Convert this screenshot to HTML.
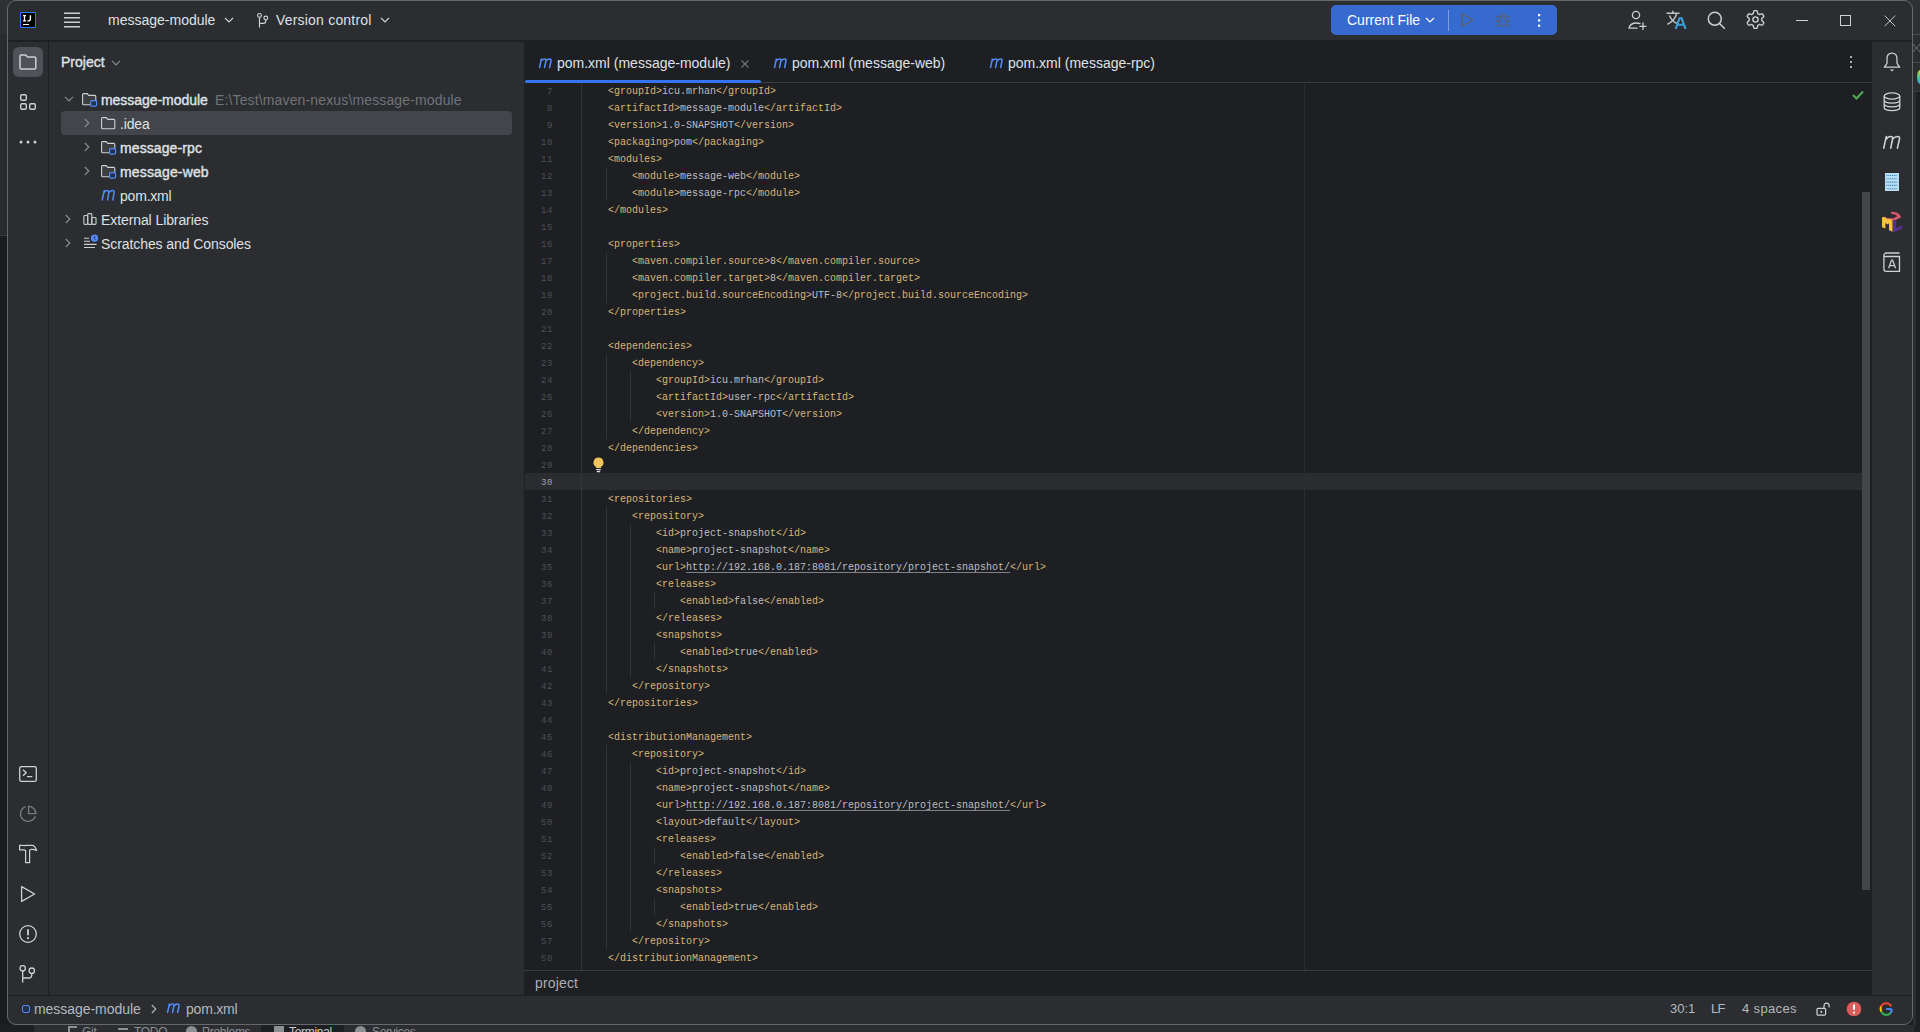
<!DOCTYPE html>
<html><head><meta charset="utf-8">
<style>
*{box-sizing:border-box}
html,body{margin:0;padding:0;width:1920px;height:1032px;overflow:hidden;background:#1b1c1f;font-family:"Liberation Sans",sans-serif;position:relative}
.a{position:absolute}
svg{position:absolute;overflow:visible}
#win{left:0;top:0;width:1920px;height:1032px;clip-path:inset(0px 8px 7px 7px round 9px);background:#2b2d30}
#frame{left:7px;top:0;width:1906px;height:1025px;border:1px solid #66686b;border-radius:9px;pointer-events:none}
.t{position:absolute;white-space:pre;color:#dfe1e5;font-size:14px;line-height:16px}
.code{position:absolute;left:584px;white-space:pre;font-family:"Liberation Mono",monospace;font-size:10px;line-height:17px;color:#bcbec4}
.g{color:#d5b778}
.sb{-webkit-text-stroke:0.4px currentColor}
.u{text-decoration:underline;text-decoration-color:#7d818a;text-underline-offset:2px}
.ln{position:absolute;left:524px;width:29px;text-align:right;font-family:"Liberation Mono",monospace;font-size:9px;letter-spacing:0.6px;line-height:17px;color:#4b5059}
</style></head><body>
<!-- outside background -->
<div class="a" style="left:0;top:0;width:20px;height:34px;background:#2e3134"></div>
<div class="a" style="left:0;top:34px;width:7px;height:201px;background:#2a2b2e"></div>
<div class="a" style="left:0;top:235px;width:7px;height:1px;background:#3a3d40"></div>
<div class="a" style="left:0;top:236px;width:7px;height:796px;background:#1b1c1f"></div>
<div class="a" style="left:1900px;top:0;width:20px;height:34px;background:#2e3134"></div><div class="a" style="left:1913px;top:34px;width:7px;height:57px;background:#2b2d30"></div>
<div class="a" style="left:1913px;top:34px;width:7px;height:1px;background:#45484c"></div>
<div class="a" style="left:1913px;top:62px;width:7px;height:1px;background:#45484c"></div>
<div class="a" style="left:1913px;top:91px;width:7px;height:1px;background:#393b40"></div>
<div class="a" style="left:1913px;top:92px;width:7px;height:940px;background:#1e1f22"></div>
<div class="a" style="left:1913px;top:92px;width:3px;height:940px;background:#2b2d30"></div>
<svg style="left:1913px;top:43px" width="8" height="10" viewBox="0 0 8 10"><path d="M0 1l7 8M7 1L0 9" stroke="#6f737a" stroke-width="1"/></svg>
<div class="a" style="left:1917px;top:70px;width:6px;height:14px;border-radius:50%;background:linear-gradient(180deg,#c9d43a,#3cc3a0 60%,#29a8e0)"></div>
<div class="a" style="left:0;top:1025px;width:1920px;height:7px;background:#1e1f22"></div>
<div class="a" style="left:34px;top:1025px;width:1880px;height:7px;background:#2b2d30"></div>



<div class="a" style="left:0;top:1025px;width:1920px;height:7px;overflow:hidden">
  <div class="a" style="left:261px;top:0;width:83px;height:7px;background:#1e1f22"></div>
  <div class="t" style="left:82px;top:-1px;font-size:12px;letter-spacing:-0.3px;color:#8c8f94">Git</div>
  <div class="t" style="left:134px;top:-1px;font-size:12px;letter-spacing:-0.3px;color:#8c8f94">TODO</div>
  <div class="t" style="left:202px;top:-1px;font-size:12px;letter-spacing:-0.3px;color:#8c8f94">Problems</div>
  <div class="t" style="left:289px;top:-1px;font-size:12px;letter-spacing:-0.3px;color:#c9ccd1">Terminal</div>
  <div class="t" style="left:372px;top:-1px;font-size:12px;letter-spacing:-0.3px;color:#8c8f94">Services</div>
  <div class="a" style="left:68px;top:1px;width:9px;height:6px;border-left:2px solid #8c8f94;border-top:2px solid #8c8f94"></div>
  <div class="a" style="left:118px;top:3px;width:10px;height:4px;border-top:2px solid #8c8f94"></div>
  <div class="a" style="left:186px;top:1px;width:11px;height:11px;border-radius:50%;background:#8c8f94"></div>
  <div class="a" style="left:274px;top:1px;width:10px;height:10px;background:#8c8f94"></div>
  <div class="a" style="left:355px;top:1px;width:11px;height:11px;border-radius:50%;background:#8c8f94"></div>
</div>
<div id="win" class="a">

  <!-- ===== TOOLBAR ===== -->
  <div class="a" style="left:20px;top:12px;width:16px;height:16px;background:#000;border:1px solid #1f7bff"></div>
  <svg style="left:20px;top:12px" width="16" height="16" viewBox="0 0 16 16"><path d="M3 3.6h3M4.5 3.6v5.2M3 8.8h3" stroke="#fff" stroke-width="1.3" fill="none"/><path d="M10.4 3.2v3.6q0 2.1-1.7 2.1H7.3" stroke="#fff" stroke-width="1.4" fill="none"/><path d="M3 12.5h6" stroke="#fff" stroke-width="1.2"/></svg>
  <svg style="left:64px;top:12px" width="16" height="16" viewBox="0 0 16 16"><path d="M0 1.2h16M0 5.7h16M0 10.3h16M0 14.8h16" stroke="#ced0d6" stroke-width="1.5"/></svg>
  <div class="t" style="left:108px;top:12px;color:#dfe1e5">message-module</div>
  <svg style="left:224px;top:16px" width="10" height="8" viewBox="0 0 10 8"><path d="M1 2l4 4 4-4" stroke="#ced0d6" stroke-width="1.2" fill="none"/></svg>
  <svg style="left:256px;top:13px" width="14" height="15" viewBox="0 0 14 15"><g stroke="#ced0d6" stroke-width="1.15" fill="none"><circle cx="3.5" cy="2.4" r="1.9"/><circle cx="9.8" cy="5" r="1.9"/><path d="M3.5 4.3V14.6M3.5 10.4H7.2Q9.8 10.4 9.8 7.8V6.9"/></g></svg>
  <div class="t" style="left:276px;top:12px;color:#dfe1e5;letter-spacing:0.2px">Version control</div>
  <svg style="left:380px;top:16px" width="10" height="8" viewBox="0 0 10 8"><path d="M1 2l4 4 4-4" stroke="#ced0d6" stroke-width="1.2" fill="none"/></svg>

  <div class="a" style="left:1331px;top:5px;width:226px;height:30px;background:#366ace;border-radius:5px"></div>
  <div class="t" style="left:1347px;top:12px;color:#fff">Current File</div>
  <svg style="left:1425px;top:16px" width="10" height="8" viewBox="0 0 10 8"><path d="M1 2l4 4 4-4" stroke="#fff" stroke-width="1.2" fill="none"/></svg>
  <div class="a" style="left:1448px;top:10px;width:1px;height:21px;background:#7f9fe3"></div>
  <svg style="left:1460px;top:12px" width="16" height="16" viewBox="0 0 16 16"><path d="M2 1.8v12.4L13 8z" stroke="#5b5f66" stroke-width="1.3" stroke-linejoin="round" fill="none"/></svg>
  <svg style="left:1495px;top:12px" width="16" height="16" viewBox="0 0 16 16"><g stroke="#5b5f66" stroke-width="1.2" fill="none"><ellipse cx="8" cy="9.8" rx="3.6" ry="4.6"/><path d="M5.5 5q0-3 2.5-3t2.5 3"/><path d="M0.5 9.2h3.5M12 9.2h3.5M1 4l3 1.8M15 4l-3 1.8M1 14.5l3-1.8M15 14.5l-3-1.8"/></g></svg>
  <svg style="left:1537px;top:13px" width="4" height="15" viewBox="0 0 4 15"><rect x="1" y="1" width="2.2" height="2.2" fill="#fff"/><rect x="1" y="6.3" width="2.2" height="2.2" fill="#fff"/><rect x="1" y="11.6" width="2.2" height="2.2" fill="#fff"/></svg>

  <svg style="left:1627px;top:10px" width="20" height="20" viewBox="0 0 20 20"><g stroke="#ced0d6" stroke-width="1.3" fill="none" stroke-linecap="round"><circle cx="9" cy="5" r="3.6"/><path d="M13 13.6Q11.5 13 9.5 13Q3 13 2 18.2h8"/><path d="M16 13v6.5M12.8 16.3h6.3"/></g></svg>
  <svg style="left:1665px;top:10px" width="22" height="20" viewBox="0 0 22 20"><g stroke="#bfc2c7" stroke-width="1.5" fill="none"><path d="M1.5 3.2h13M7.8 .8v2.4M11.8 3.2q-1.5 7-9.5 11.2M4.5 5.5q2.5 6 7.5 8"/></g><path d="M10.7 18.8l3.8-10.5h2.2l3.8 10.5M12.3 14.8h6.6" stroke="#3aa0db" stroke-width="2.1" fill="none"/></svg>
  <svg style="left:1707px;top:11px" width="19" height="19" viewBox="0 0 19 19"><g stroke="#ced0d6" stroke-width="1.5" fill="none"><circle cx="7.8" cy="7.8" r="6.5"/><path d="M12.5 12.5l5.3 5.3"/></g></svg>
  <svg style="left:1746px;top:10px" width="19" height="19" viewBox="0 0 19 19"><g stroke="#ced0d6" stroke-width="1.4" fill="none" stroke-linejoin="round"><path d="M9.50 0.60 L9.97 0.61 L10.43 0.65 L10.89 0.71 L11.23 1.36 L11.47 2.16 L11.63 2.96 L11.76 3.62 L12.06 3.74 L12.36 3.89 L12.65 4.04 L12.93 4.22 L13.20 4.40 L13.46 4.60 L14.10 4.39 L14.87 4.13 L15.69 3.93 L16.42 3.90 L16.70 4.27 L16.96 4.65 L17.21 5.05 L17.43 5.46 L17.63 5.88 L17.81 6.31 L17.42 6.93 L16.84 7.53 L16.23 8.07 L15.72 8.51 L15.77 8.84 L15.79 9.17 L15.80 9.50 L15.79 9.83 L15.77 10.16 L15.72 10.49 L16.23 10.93 L16.84 11.47 L17.42 12.07 L17.81 12.69 L17.63 13.12 L17.43 13.54 L17.21 13.95 L16.96 14.35 L16.70 14.73 L16.42 15.10 L15.69 15.07 L14.87 14.87 L14.10 14.61 L13.46 14.40 L13.20 14.60 L12.93 14.78 L12.65 14.96 L12.36 15.11 L12.06 15.26 L11.76 15.38 L11.63 16.04 L11.47 16.84 L11.23 17.64 L10.89 18.29 L10.43 18.35 L9.97 18.39 L9.50 18.40 L9.03 18.39 L8.57 18.35 L8.11 18.29 L7.77 17.64 L7.53 16.84 L7.37 16.04 L7.24 15.38 L6.94 15.26 L6.64 15.11 L6.35 14.96 L6.07 14.78 L5.80 14.60 L5.54 14.40 L4.90 14.61 L4.13 14.87 L3.31 15.07 L2.58 15.10 L2.30 14.73 L2.04 14.35 L1.79 13.95 L1.57 13.54 L1.37 13.12 L1.19 12.69 L1.58 12.07 L2.16 11.47 L2.77 10.93 L3.28 10.49 L3.23 10.16 L3.21 9.83 L3.20 9.50 L3.21 9.17 L3.23 8.84 L3.28 8.51 L2.77 8.07 L2.16 7.53 L1.58 6.93 L1.19 6.31 L1.37 5.88 L1.57 5.46 L1.79 5.05 L2.04 4.65 L2.30 4.27 L2.58 3.90 L3.31 3.93 L4.13 4.13 L4.90 4.39 L5.54 4.60 L5.80 4.40 L6.07 4.22 L6.35 4.04 L6.64 3.89 L6.94 3.74 L7.24 3.62 L7.37 2.96 L7.53 2.16 L7.77 1.36 L8.11 0.71 L8.57 0.65 L9.03 0.61Z"/><circle cx="9.5" cy="9.5" r="2.6"/></g></svg>
  <div class="a" style="left:1796px;top:20px;width:12px;height:1px;background:#ced0d6"></div>
  <div class="a" style="left:1840px;top:15px;width:11px;height:11px;border:1px solid #ced0d6"></div>
  <svg style="left:1884px;top:15px" width="12" height="12" viewBox="0 0 12 12"><path d="M.6 .6l10.6 10.6M11.2 .6L.6 11.2" stroke="#c4c6cb" stroke-width="1"/></svg>

  <!-- ===== LEFT STRIP ===== -->
  <div class="a" style="left:13px;top:47px;width:30px;height:30px;background:#4f5258;border-radius:6px"></div>
  <svg style="left:19px;top:54px" width="18" height="16" viewBox="0 0 18 16"><path d="M2.2 1h4.4l2 2h7q1.2 0 1.2 1.2v9.6q0 1.2-1.2 1.2H2.2Q1 15 1 13.8V2.2Q1 1 2.2 1z" fill="none" stroke="#ced0d6" stroke-width="1.5"/></svg>
  <svg style="left:19px;top:93px" width="18" height="18" viewBox="0 0 18 18"><g fill="none" stroke="#ced0d6" stroke-width="1.4"><rect x="1.7" y="1.7" width="5.6" height="5.6" rx="1.3"/><rect x="1.7" y="10.7" width="5.6" height="5.6" rx="1.3"/><rect x="10.7" y="10.7" width="5.6" height="5.6" rx="1.3"/></g></svg>
  <svg style="left:19px;top:140px" width="18" height="4" viewBox="0 0 18 4"><circle cx="2" cy="2" r="1.5" fill="#ced0d6"/><circle cx="9" cy="2" r="1.5" fill="#ced0d6"/><circle cx="16" cy="2" r="1.5" fill="#ced0d6"/></svg>

  <!-- ===== PROJECT PANEL ===== -->
  <div class="t sb" style="left:61px;top:54px;color:#dfe1e5;letter-spacing:0px">Project</div>
  <svg style="left:111px;top:60px" width="10" height="6" viewBox="0 0 10 6"><path d="M1 .8l4 4 4-4" stroke="#868a91" stroke-width="1.2" fill="none"/></svg>
  <div class="a" style="left:61px;top:111px;width:451px;height:24px;background:#43454a;border-radius:4px"></div>
  <svg style="left:64px;top:96px" width="10" height="6" viewBox="0 0 10 6"><path d="M1 .8l4 4 4-4" stroke="#868a91" stroke-width="1.2" fill="none"/></svg>
  <svg style="left:82px;top:93px" width="16" height="14" viewBox="0 0 16 14"><path d="M1.6 .6h3.6l1.6 1.8h6q1 0 1 1v7.4q0 1-1 1H1.6q-1 0-1-1V1.6q0-1 1-1z" fill="#3c3e42" stroke="#ced0d6" stroke-width="1.1"/><rect x="8.6" y="7.6" width="6" height="5.6" rx="1.2" fill="#25324d" stroke="#548af7" stroke-width="1.2"/></svg>
  <div class="t sb" style="left:101px;top:92px;letter-spacing:-0.05px">message-module</div>
  <div class="t" style="left:215px;top:92px;color:#6f737a;letter-spacing:0.14px">E:\Test\maven-nexus\message-module</div>
  <svg style="left:84px;top:118px" width="6" height="10" viewBox="0 0 6 10"><path d="M.8 1l4 4-4 4" stroke="#868a91" stroke-width="1.2" fill="none"/></svg>
  <svg style="left:101px;top:117px" width="16" height="14" viewBox="0 0 16 14"><path d="M1.6 .6h3.6l1.6 1.8h6q1 0 1 1v7.4q0 1-1 1H1.6q-1 0-1-1V1.6q0-1 1-1z" fill="none" stroke="#ced0d6" stroke-width="1.1"/></svg>
  <div class="t" style="left:120px;top:116px;letter-spacing:-0.15px">.idea</div>
  <svg style="left:84px;top:142px" width="6" height="10" viewBox="0 0 6 10"><path d="M.8 1l4 4-4 4" stroke="#868a91" stroke-width="1.2" fill="none"/></svg>
  <svg style="left:101px;top:141px" width="16" height="14" viewBox="0 0 16 14"><path d="M1.6 .6h3.6l1.6 1.8h6q1 0 1 1v7.4q0 1-1 1H1.6q-1 0-1-1V1.6q0-1 1-1z" fill="#3c3e42" stroke="#ced0d6" stroke-width="1.1"/><rect x="8.6" y="7.6" width="6" height="5.6" rx="1.2" fill="#25324d" stroke="#548af7" stroke-width="1.2"/></svg>
  <div class="t sb" style="left:120px;top:140px;letter-spacing:0.1px">message-rpc</div>
  <svg style="left:84px;top:166px" width="6" height="10" viewBox="0 0 6 10"><path d="M.8 1l4 4-4 4" stroke="#868a91" stroke-width="1.2" fill="none"/></svg>
  <svg style="left:101px;top:165px" width="16" height="14" viewBox="0 0 16 14"><path d="M1.6 .6h3.6l1.6 1.8h6q1 0 1 1v7.4q0 1-1 1H1.6q-1 0-1-1V1.6q0-1 1-1z" fill="#3c3e42" stroke="#ced0d6" stroke-width="1.1"/><rect x="8.6" y="7.6" width="6" height="5.6" rx="1.2" fill="#25324d" stroke="#548af7" stroke-width="1.2"/></svg>
  <div class="t sb" style="left:120px;top:164px;letter-spacing:0.15px">message-web</div>
  <svg style="left:101px;top:189px" width="17" height="12" viewBox="0 0 17 12"><path d="M1.2 11L3.2 1.5M2.6 4.2q1.6-2.8 3.6-2.8q2 0 1.6 2.2L6.6 11M8 3.5q1.6-2.1 3.5-2.1q2 0 1.6 2.2L11.8 11" stroke="#548af7" stroke-width="1.5" fill="none" stroke-linecap="round"/></svg>
  <div class="t" style="left:120px;top:188px;letter-spacing:-0.2px">pom.xml</div>
  <svg style="left:65px;top:214px" width="6" height="10" viewBox="0 0 6 10"><path d="M.8 1l4 4-4 4" stroke="#868a91" stroke-width="1.2" fill="none"/></svg>
  <svg style="left:83px;top:212px" width="15" height="14" viewBox="0 0 15 14"><g fill="none" stroke="#c4c7cc" stroke-width="1.15"><rect x=".9" y="3.5" width="3.8" height="8.8" rx=".9"/><rect x="4.7" y="1.6" width="4.1" height="10.7" rx=".9"/><rect x="8.8" y="5.5" width="4.2" height="6.8" rx=".9"/></g></svg>
  <div class="t" style="left:101px;top:212px;letter-spacing:-0.09px">External Libraries</div>
  <svg style="left:65px;top:238px" width="6" height="10" viewBox="0 0 6 10"><path d="M.8 1l4 4-4 4" stroke="#868a91" stroke-width="1.2" fill="none"/></svg>
  <svg style="left:83px;top:234px" width="16" height="15" viewBox="0 0 16 15"><path d="M1 4.3h5M1 7.3h6M1 10.4h12.5M1 13.5h11" stroke="#ced0d6" stroke-width="1.1"/><circle cx="11.5" cy="4.2" r="3.6" fill="#548af7"/><path d="M11.4 2.2v2.3l1.3.9" stroke="#2b2d30" stroke-width="1" fill="none"/></svg>
  <div class="t" style="left:101px;top:236px;letter-spacing:-0.08px">Scratches and Consoles</div>
  <!-- toolbar border -->
  <div class="a" style="left:0;top:40px;width:1920px;height:2px;background:#1f2023"></div>
  <!-- left strip border -->
  <div class="a" style="left:48px;top:42px;width:1px;height:953px;background:#1e1f22"></div>
  <!-- editor -->
  <div class="a" id="editor" style="left:524px;top:42px;width:1348px;height:953px;background:#1e1f22"></div>

  <!-- ===== EDITOR TABS ===== -->
  <div class="a" style="left:524px;top:82px;width:1348px;height:1px;background:#393b40"></div>
  <div class="a" style="left:525px;top:80px;width:236px;height:3px;background:#3574f0;border-radius:1.5px"></div>
  <svg style="left:538px;top:58px" width="16" height="11" viewBox="0 0 16 11"><path d="M.9 9.5L2.6 1.1M2.2 3.4q1.5-2.4 3.3-2.4q1.9 0 1.5 2L5.6 9.5M7.1 2.9q1.5-1.9 3.2-1.9q1.9 0 1.5 2L10.5 9.5" stroke="#548af7" stroke-width="1.45" fill="none" stroke-linecap="round" transform="translate(.6 0) scale(1.05 1)"/></svg>
  <div class="t" style="left:557px;top:55px;color:#dfe1e5">pom.xml (message-module)</div>
  <svg style="left:741px;top:60px" width="8" height="8" viewBox="0 0 8 8"><path d="M.5 .5l7 7M7.5 .5l-7 7" stroke="#6f737a" stroke-width="1.1"/></svg>
  <svg style="left:773px;top:58px" width="16" height="11" viewBox="0 0 16 11"><path d="M.9 9.5L2.6 1.1M2.2 3.4q1.5-2.4 3.3-2.4q1.9 0 1.5 2L5.6 9.5M7.1 2.9q1.5-1.9 3.2-1.9q1.9 0 1.5 2L10.5 9.5" stroke="#548af7" stroke-width="1.45" fill="none" stroke-linecap="round" transform="translate(.6 0) scale(1.05 1)"/></svg>
  <div class="t" style="left:792px;top:55px;color:#dfe1e5">pom.xml (message-web)</div>
  <svg style="left:989px;top:58px" width="16" height="11" viewBox="0 0 16 11"><path d="M.9 9.5L2.6 1.1M2.2 3.4q1.5-2.4 3.3-2.4q1.9 0 1.5 2L5.6 9.5M7.1 2.9q1.5-1.9 3.2-1.9q1.9 0 1.5 2L10.5 9.5" stroke="#548af7" stroke-width="1.45" fill="none" stroke-linecap="round" transform="translate(.6 0) scale(1.05 1)"/></svg>
  <div class="t" style="left:1008px;top:55px;color:#dfe1e5">pom.xml (message-rpc)</div>
  <svg style="left:1849px;top:55px" width="4" height="15" viewBox="0 0 4 15"><circle cx="2" cy="2" r="1.1" fill="#ced0d6"/><circle cx="2" cy="7" r="1.1" fill="#ced0d6"/><circle cx="2" cy="12" r="1.1" fill="#ced0d6"/></svg>
  <svg style="left:1852px;top:90px" width="12" height="10" viewBox="0 0 12 10"><path d="M1 5l3.5 3.5L11 1.5" stroke="#4fa853" stroke-width="2.2" fill="none"/></svg>
  <!-- ===== EDITOR CONTENT ===== -->
<div class="a" style="left:525px;top:473px;width:1337px;height:17px;background:#2a2c30"></div>
<div class="a" style="left:581px;top:83px;width:1px;height:887px;background:#313438"></div>
<div class="a" style="left:1304px;top:83px;width:1px;height:887px;background:#2b2d30"></div>
<div class="a" style="left:606px;top:167px;width:1px;height:34px;background:#313337"></div>
<div class="a" style="left:606px;top:252px;width:1px;height:51px;background:#313337"></div>
<div class="a" style="left:606px;top:354px;width:1px;height:85px;background:#313337"></div>
<div class="a" style="left:630px;top:371px;width:1px;height:51px;background:#313337"></div>
<div class="a" style="left:606px;top:507px;width:1px;height:187px;background:#313337"></div>
<div class="a" style="left:630px;top:524px;width:1px;height:153px;background:#313337"></div>
<div class="a" style="left:654px;top:592px;width:1px;height:17px;background:#313337"></div>
<div class="a" style="left:654px;top:643px;width:1px;height:17px;background:#313337"></div>
<div class="a" style="left:606px;top:745px;width:1px;height:204px;background:#313337"></div>
<div class="a" style="left:630px;top:762px;width:1px;height:170px;background:#313337"></div>
<div class="a" style="left:654px;top:847px;width:1px;height:17px;background:#313337"></div>
<div class="a" style="left:654px;top:898px;width:1px;height:17px;background:#313337"></div>
<div class="ln" style="top:83.5px;color:#4b5059">7</div>
<div class="ln" style="top:100.5px;color:#4b5059">8</div>
<div class="ln" style="top:117.5px;color:#4b5059">9</div>
<div class="ln" style="top:134.5px;color:#4b5059">10</div>
<div class="ln" style="top:151.5px;color:#4b5059">11</div>
<div class="ln" style="top:168.5px;color:#4b5059">12</div>
<div class="ln" style="top:185.5px;color:#4b5059">13</div>
<div class="ln" style="top:202.5px;color:#4b5059">14</div>
<div class="ln" style="top:219.5px;color:#4b5059">15</div>
<div class="ln" style="top:236.5px;color:#4b5059">16</div>
<div class="ln" style="top:253.5px;color:#4b5059">17</div>
<div class="ln" style="top:270.5px;color:#4b5059">18</div>
<div class="ln" style="top:287.5px;color:#4b5059">19</div>
<div class="ln" style="top:304.5px;color:#4b5059">20</div>
<div class="ln" style="top:321.5px;color:#4b5059">21</div>
<div class="ln" style="top:338.5px;color:#4b5059">22</div>
<div class="ln" style="top:355.5px;color:#4b5059">23</div>
<div class="ln" style="top:372.5px;color:#4b5059">24</div>
<div class="ln" style="top:389.5px;color:#4b5059">25</div>
<div class="ln" style="top:406.5px;color:#4b5059">26</div>
<div class="ln" style="top:423.5px;color:#4b5059">27</div>
<div class="ln" style="top:440.5px;color:#4b5059">28</div>
<div class="ln" style="top:457.5px;color:#4b5059">29</div>
<div class="ln" style="top:474.5px;color:#a1a3ab">30</div>
<div class="ln" style="top:491.5px;color:#4b5059">31</div>
<div class="ln" style="top:508.5px;color:#4b5059">32</div>
<div class="ln" style="top:525.5px;color:#4b5059">33</div>
<div class="ln" style="top:542.5px;color:#4b5059">34</div>
<div class="ln" style="top:559.5px;color:#4b5059">35</div>
<div class="ln" style="top:576.5px;color:#4b5059">36</div>
<div class="ln" style="top:593.5px;color:#4b5059">37</div>
<div class="ln" style="top:610.5px;color:#4b5059">38</div>
<div class="ln" style="top:627.5px;color:#4b5059">39</div>
<div class="ln" style="top:644.5px;color:#4b5059">40</div>
<div class="ln" style="top:661.5px;color:#4b5059">41</div>
<div class="ln" style="top:678.5px;color:#4b5059">42</div>
<div class="ln" style="top:695.5px;color:#4b5059">43</div>
<div class="ln" style="top:712.5px;color:#4b5059">44</div>
<div class="ln" style="top:729.5px;color:#4b5059">45</div>
<div class="ln" style="top:746.5px;color:#4b5059">46</div>
<div class="ln" style="top:763.5px;color:#4b5059">47</div>
<div class="ln" style="top:780.5px;color:#4b5059">48</div>
<div class="ln" style="top:797.5px;color:#4b5059">49</div>
<div class="ln" style="top:814.5px;color:#4b5059">50</div>
<div class="ln" style="top:831.5px;color:#4b5059">51</div>
<div class="ln" style="top:848.5px;color:#4b5059">52</div>
<div class="ln" style="top:865.5px;color:#4b5059">53</div>
<div class="ln" style="top:882.5px;color:#4b5059">54</div>
<div class="ln" style="top:899.5px;color:#4b5059">55</div>
<div class="ln" style="top:916.5px;color:#4b5059">56</div>
<div class="ln" style="top:933.5px;color:#4b5059">57</div>
<div class="ln" style="top:950.5px;color:#4b5059">58</div>
<div class="code" style="left:608px;top:83px"><span class="g">&lt;groupId&gt;</span>icu.mrhan<span class="g">&lt;/groupId&gt;</span></div>
<div class="code" style="left:608px;top:100px"><span class="g">&lt;artifactId&gt;</span>message-module<span class="g">&lt;/artifactId&gt;</span></div>
<div class="code" style="left:608px;top:117px"><span class="g">&lt;version&gt;</span>1.0-SNAPSHOT<span class="g">&lt;/version&gt;</span></div>
<div class="code" style="left:608px;top:134px"><span class="g">&lt;packaging&gt;</span>pom<span class="g">&lt;/packaging&gt;</span></div>
<div class="code" style="left:608px;top:151px"><span class="g">&lt;modules&gt;</span></div>
<div class="code" style="left:632px;top:168px"><span class="g">&lt;module&gt;</span>message-web<span class="g">&lt;/module&gt;</span></div>
<div class="code" style="left:632px;top:185px"><span class="g">&lt;module&gt;</span>message-rpc<span class="g">&lt;/module&gt;</span></div>
<div class="code" style="left:608px;top:202px"><span class="g">&lt;/modules&gt;</span></div>
<div class="code" style="left:608px;top:236px"><span class="g">&lt;properties&gt;</span></div>
<div class="code" style="left:632px;top:253px"><span class="g">&lt;maven.compiler.source&gt;</span>8<span class="g">&lt;/maven.compiler.source&gt;</span></div>
<div class="code" style="left:632px;top:270px"><span class="g">&lt;maven.compiler.target&gt;</span>8<span class="g">&lt;/maven.compiler.target&gt;</span></div>
<div class="code" style="left:632px;top:287px"><span class="g">&lt;project.build.sourceEncoding&gt;</span>UTF-8<span class="g">&lt;/project.build.sourceEncoding&gt;</span></div>
<div class="code" style="left:608px;top:304px"><span class="g">&lt;/properties&gt;</span></div>
<div class="code" style="left:608px;top:338px"><span class="g">&lt;dependencies&gt;</span></div>
<div class="code" style="left:632px;top:355px"><span class="g">&lt;dependency&gt;</span></div>
<div class="code" style="left:656px;top:372px"><span class="g">&lt;groupId&gt;</span>icu.mrhan<span class="g">&lt;/groupId&gt;</span></div>
<div class="code" style="left:656px;top:389px"><span class="g">&lt;artifactId&gt;</span>user-rpc<span class="g">&lt;/artifactId&gt;</span></div>
<div class="code" style="left:656px;top:406px"><span class="g">&lt;version&gt;</span>1.0-SNAPSHOT<span class="g">&lt;/version&gt;</span></div>
<div class="code" style="left:632px;top:423px"><span class="g">&lt;/dependency&gt;</span></div>
<div class="code" style="left:608px;top:440px"><span class="g">&lt;/dependencies&gt;</span></div>
<div class="code" style="left:608px;top:491px"><span class="g">&lt;repositories&gt;</span></div>
<div class="code" style="left:632px;top:508px"><span class="g">&lt;repository&gt;</span></div>
<div class="code" style="left:656px;top:525px"><span class="g">&lt;id&gt;</span>project-snapshot<span class="g">&lt;/id&gt;</span></div>
<div class="code" style="left:656px;top:542px"><span class="g">&lt;name&gt;</span>project-snapshot<span class="g">&lt;/name&gt;</span></div>
<div class="code" style="left:656px;top:559px"><span class="g">&lt;url&gt;</span><span class="u">http://192.168.0.187:8081/repository/project-snapshot/</span><span class="g">&lt;/url&gt;</span></div>
<div class="code" style="left:656px;top:576px"><span class="g">&lt;releases&gt;</span></div>
<div class="code" style="left:680px;top:593px"><span class="g">&lt;enabled&gt;</span>false<span class="g">&lt;/enabled&gt;</span></div>
<div class="code" style="left:656px;top:610px"><span class="g">&lt;/releases&gt;</span></div>
<div class="code" style="left:656px;top:627px"><span class="g">&lt;snapshots&gt;</span></div>
<div class="code" style="left:680px;top:644px"><span class="g">&lt;enabled&gt;</span>true<span class="g">&lt;/enabled&gt;</span></div>
<div class="code" style="left:656px;top:661px"><span class="g">&lt;/snapshots&gt;</span></div>
<div class="code" style="left:632px;top:678px"><span class="g">&lt;/repository&gt;</span></div>
<div class="code" style="left:608px;top:695px"><span class="g">&lt;/repositories&gt;</span></div>
<div class="code" style="left:608px;top:729px"><span class="g">&lt;distributionManagement&gt;</span></div>
<div class="code" style="left:632px;top:746px"><span class="g">&lt;repository&gt;</span></div>
<div class="code" style="left:656px;top:763px"><span class="g">&lt;id&gt;</span>project-snapshot<span class="g">&lt;/id&gt;</span></div>
<div class="code" style="left:656px;top:780px"><span class="g">&lt;name&gt;</span>project-snapshot<span class="g">&lt;/name&gt;</span></div>
<div class="code" style="left:656px;top:797px"><span class="g">&lt;url&gt;</span><span class="u">http://192.168.0.187:8081/repository/project-snapshot/</span><span class="g">&lt;/url&gt;</span></div>
<div class="code" style="left:656px;top:814px"><span class="g">&lt;layout&gt;</span>default<span class="g">&lt;/layout&gt;</span></div>
<div class="code" style="left:656px;top:831px"><span class="g">&lt;releases&gt;</span></div>
<div class="code" style="left:680px;top:848px"><span class="g">&lt;enabled&gt;</span>false<span class="g">&lt;/enabled&gt;</span></div>
<div class="code" style="left:656px;top:865px"><span class="g">&lt;/releases&gt;</span></div>
<div class="code" style="left:656px;top:882px"><span class="g">&lt;snapshots&gt;</span></div>
<div class="code" style="left:680px;top:899px"><span class="g">&lt;enabled&gt;</span>true<span class="g">&lt;/enabled&gt;</span></div>
<div class="code" style="left:656px;top:916px"><span class="g">&lt;/snapshots&gt;</span></div>
<div class="code" style="left:632px;top:933px"><span class="g">&lt;/repository&gt;</span></div>
<div class="code" style="left:608px;top:950px"><span class="g">&lt;/distributionManagement&gt;</span></div>
  <svg style="left:593px;top:457px" width="11" height="16" viewBox="0 0 11 16"><path d="M5.5 .5a5 5 0 0 0-3 9q.5.5.5 1.2V11h5v-.3q0-.7.5-1.2a5 5 0 0 0-3-9z" fill="#f2c55c"/><path d="M3.3 12.6h4.4M3.8 14.6h3.4" stroke="#dfe1e5" stroke-width="1.1"/></svg>
  <!-- breadcrumb -->
  <div class="a" style="left:524px;top:970px;width:1348px;height:1px;background:#393b40"></div>
  <div class="t" style="left:535px;top:975px;color:#a8adbd;letter-spacing:0.15px">project</div>
  <!-- scrollbar -->
  <div class="a" style="left:1862px;top:192px;width:8px;height:698px;background:#434548"></div>

  <!-- ===== LEFT STRIP BOTTOM ===== -->
  <svg style="left:19px;top:766px" width="18" height="16" viewBox="0 0 18 16"><rect x=".7" y=".7" width="16.6" height="14.6" rx="1.6" fill="none" stroke="#ced0d6" stroke-width="1.3"/><path d="M4 3.8l3.2 3-3.2 3M8 10.6h5.3" stroke="#ced0d6" stroke-width="1.3" fill="none"/></svg>
  <svg style="left:16px;top:802px" width="24" height="24" viewBox="0 0 24 24"><g fill="none" stroke="#76797e" stroke-width="1.4"><path d="M9.6 4.6A7.6 7.6 0 1 0 19.3 14.3"/><path d="M12.6 4.4V11.6H19.8A7.2 7.2 0 0 0 12.6 4.4Z"/></g></svg>
  <svg style="left:16px;top:842px" width="24" height="24" viewBox="0 0 24 24"><path d="M3.6 3.3H6.6Q8 4 9.6 3.4H16Q19.2 3.4 20.6 8.6Q18.6 7.3 15.6 7.4Q14.1 7.6 13.6 8.4V20.6H9.6V8.4Q8.6 7.6 6.6 7.9H3.6Z" fill="none" stroke="#ced0d6" stroke-width="1.25" stroke-linejoin="round"/></svg>
  <svg style="left:20px;top:885px" width="16" height="18" viewBox="0 0 16 18"><path d="M1.6 1.6v14.8L14.6 9z" fill="none" stroke="#ced0d6" stroke-width="1.3" stroke-linejoin="round"/></svg>
  <svg style="left:19px;top:925px" width="18" height="18" viewBox="0 0 18 18"><circle cx="9" cy="9" r="8.3" fill="none" stroke="#ced0d6" stroke-width="1.3"/><path d="M9 4.2v6" stroke="#ced0d6" stroke-width="1.8"/><circle cx="9" cy="13.2" r="1.1" fill="#ced0d6"/></svg>
  <svg style="left:19px;top:965px" width="18" height="18" viewBox="0 0 18 18"><g fill="none" stroke="#ced0d6" stroke-width="1.3"><circle cx="3.7" cy="3.3" r="2.7"/><circle cx="12.8" cy="5.7" r="2.7"/><path d="M3.7 6v11.5M3.7 13h5.8q3.3 0 3.3-3.3V8.4"/></g></svg>

  <!-- ===== RIGHT STRIP ===== -->
  <svg style="left:1883px;top:52px" width="18" height="20" viewBox="0 0 18 20"><path d="M9 1.2q-5 0-5 5.5v4.6L1.3 15.2h15.4L14 11.3V6.7q0-5.5-5-5.5z" fill="none" stroke="#ced0d6" stroke-width="1.3" stroke-linejoin="round"/><path d="M6.8 17.6h4.4L9 19.4z" fill="#ced0d6"/></svg>
  <svg style="left:1883px;top:92px" width="18" height="20" viewBox="0 0 18 20"><g fill="none" stroke="#ced0d6" stroke-width="1.3"><ellipse cx="9" cy="4" rx="7.8" ry="3.1"/><path d="M1.2 4v11.6q0 3.1 7.8 3.1t7.8-3.1V4M1.2 8q0 3.1 7.8 3.1T16.8 8M1.2 11.8q0 3.1 7.8 3.1t7.8-3.1"/></g></svg>
  <svg style="left:1882px;top:135px" width="20" height="14" viewBox="0 0 20 14"><path d="M1.3 13.2L3.7 1.6M3.1 4.8q2-3.4 4.5-3.4q2.4 0 1.9 2.6L7.8 13.2M9.6 4q2-2.6 4.3-2.6q2.5 0 2 2.6L14 13.2" stroke="#ced0d6" stroke-width="1.5" fill="none" stroke-linecap="round" transform="translate(.3 0) scale(1.08 1)"/></svg>
  <div class="a" style="left:1885px;top:173px;width:14px;height:18px;background:#b7def4"></div>
  <svg style="left:1885px;top:173px" width="14" height="18" viewBox="0 0 14 18"><g stroke="#3d7fb0" stroke-width="1.1" stroke-dasharray="1 .8"><path d="M1.5 2.5h11M1.5 5.8h11M1.5 9.1h11M1.5 12.4h11M1.5 15.7h11"/></g></svg>
  <svg style="left:1878px;top:208px" width="28" height="28" viewBox="0 0 28 28"><path d="M5 9.6Q13 14.2 21.5 8.6Q19.5 5.2 13.2 4.8" stroke="#d9566f" stroke-width="2.6" fill="none"/><path d="M4 9.2h3.4l2.3 2.4 1.2-.9 3.6 1.4V23.8L11 22.2V15.2l-1.4 1.3L7.4 15V20.6L4 19.2z" fill="#f5c335"/><path d="M15 12.6l3.2-.9V20.2l5.8-3v3.6L15 24.6z" fill="#5a2d91"/></svg>
  <svg style="left:1883px;top:252px" width="18" height="20" viewBox="0 0 18 20"><g fill="none" stroke="#ced0d6" stroke-width="1.3"><path d="M16.5 1H3.5Q.9 1 .9 3.6V17q0 2.3 2.3 2.3h13.3V4.5H3.6Q.9 4.5 .9 3.6"/></g><path d="M5.6 16.2l3-8h1l3 8M6.7 13.6h4.7" stroke="#ced0d6" stroke-width="1.2" fill="none"/></svg>

  <!-- ===== STATUS BAR ===== -->
  <div class="a" style="left:22px;top:1005px;width:8px;height:8px;border:1.3px solid #548af7;background:#25324d;border-radius:2px"></div>
  <div class="t" style="left:34px;top:1001px;color:#b4b8bf;letter-spacing:-0.05px">message-module</div>
  <svg style="left:151px;top:1004px" width="6" height="10" viewBox="0 0 6 10"><path d="M.8 1l4 4-4 4" stroke="#b4b8bf" stroke-width="1.1" fill="none"/></svg>
  <svg style="left:166px;top:1003px" width="16" height="11" viewBox="0 0 16 11"><path d="M.9 9.5L2.6 1.1M2.2 3.4q1.5-2.4 3.3-2.4q1.9 0 1.5 2L5.6 9.5M7.1 2.9q1.5-1.9 3.2-1.9q1.9 0 1.5 2L10.5 9.5" stroke="#548af7" stroke-width="1.45" fill="none" stroke-linecap="round" transform="translate(.6 0) scale(1.05 1)"/></svg>
  <div class="t" style="left:186px;top:1001px;color:#b4b8bf;letter-spacing:-0.2px">pom.xml</div>
  <div class="t" style="left:1670px;top:1001px;color:#b4b8bf;font-size:13px;letter-spacing:0px">30:1</div>
  <div class="t" style="left:1711px;top:1001px;color:#b4b8bf;font-size:13px;letter-spacing:-0.8px">LF</div>
  <div class="t" style="left:1742px;top:1001px;color:#b4b8bf;font-size:13px;letter-spacing:0.35px">4 spaces</div>
  <svg style="left:1816px;top:1002px" width="15" height="14" viewBox="0 0 15 14"><rect x="1" y="6.3" width="8.6" height="6.8" rx="1.2" fill="none" stroke="#ced0d6" stroke-width="1.2"/><path d="M8 6.3V4.2q0-3 2.6-3t2.6 3v1.2" fill="none" stroke="#ced0d6" stroke-width="1.2"/><rect x="4.5" y="8.8" width="1.6" height="2" fill="#ced0d6"/></svg>
  <svg style="left:1846px;top:1001px" width="16" height="16" viewBox="0 0 16 16"><circle cx="8" cy="8" r="7.3" fill="#db5c5c"/><path d="M8 3.6v5.2" stroke="#fff" stroke-width="2"/><circle cx="8" cy="11.6" r="1.1" fill="#fff"/></svg>
  <svg style="left:1879px;top:1002px" width="14" height="14" viewBox="0 0 14 14"><path d="M12.6 7H7.1" stroke="#4285f4" stroke-width="2.2"/><path d="M12.2 4.3A5.6 5.6 0 0 0 2 4.8" stroke="#ea4335" stroke-width="2.2" fill="none"/><path d="M2 4.8a5.6 5.6 0 0 0 .3 5" stroke="#fbbc05" stroke-width="2.2" fill="none"/><path d="M2.3 9.8a5.6 5.6 0 0 0 9.2 1.2" stroke="#34a853" stroke-width="2.2" fill="none"/><path d="M11.5 11a5.6 5.6 0 0 0 1.1-4" stroke="#4285f4" stroke-width="2.2" fill="none"/></svg>
  <!-- status bar border -->
  <div class="a" style="left:0;top:995px;width:1920px;height:1px;background:#1e1f22"></div>
</div>
<div id="frame" class="a"></div>
</body></html>
